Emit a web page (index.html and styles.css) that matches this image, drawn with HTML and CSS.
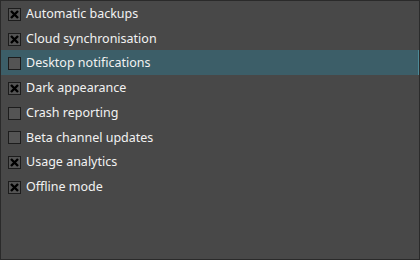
FILE: index.html
```html
<!DOCTYPE html>
<html>
<head>
<meta charset="utf-8">
<link rel="stylesheet" href="styles.css">
</head>
<body>
<div class="panel">
  <div class="row"><span class="box checked"><svg viewBox="0 0 13 13"><path d="M3 3L10 10M10 3L3 10"/></svg></span><span class="label">Automatic backups</span></div>
  <div class="row"><span class="box checked"><svg viewBox="0 0 13 13"><path d="M3 3L10 10M10 3L3 10"/></svg></span><span class="label">Cloud synchronisation</span></div>
  <div class="row selected"><span class="box"></span><span class="label">Desktop notifications</span></div>
  <div class="row"><span class="box checked"><svg viewBox="0 0 13 13"><path d="M3 3L10 10M10 3L3 10"/></svg></span><span class="label">Dark appearance</span></div>
  <div class="row"><span class="box"></span><span class="label">Crash reporting</span></div>
  <div class="row"><span class="box"></span><span class="label">Beta channel updates</span></div>
  <div class="row"><span class="box checked"><svg viewBox="0 0 13 13"><path d="M3 3L10 10M10 3L3 10"/></svg></span><span class="label">Usage analytics</span></div>
  <div class="row"><span class="box checked"><svg viewBox="0 0 13 13"><path d="M3 3L10 10M10 3L3 10"/></svg></span><span class="label">Offline mode</span></div>
</div>
</body>
</html>
```
FILE: styles.css
```css
html, body {
  margin: 0;
  padding: 0;
  background: #484848;
}
.panel {
  box-sizing: border-box;
  width: 420px;
  height: 260px;
  border: 1px solid #2a2a2a;
  background: #484848;
  display: flex;
  flex-direction: column;
  font-family: "Noto Sans", "DejaVu Sans", sans-serif;
  font-size: 12.5px;
  color: #f2f2f2;
}
.row {
  box-sizing: border-box;
  height: 24.7px;
  flex: 0 0 24.7px;
  display: flex;
  align-items: center;
  padding-left: 7px;
  gap: 5px;
}
.row.selected {
  background: #3c5e68;
  border-right: 1px solid #4d8a98;
}
.box {
  box-sizing: border-box;
  width: 13px;
  height: 13px;
  margin-top: 2px;
  border: 1px solid #1c1c1c;
  background: #545454;
  display: block;
  position: relative;
}
.box svg {
  position: absolute;
  left: -1px;
  top: -1px;
  width: 13px;
  height: 13px;
}
.box svg path {
  stroke: #000;
  stroke-width: 2.4;
  fill: none;
}
.label {
  line-height: 1;
  white-space: nowrap;
  margin-top: 2px;
}
```
